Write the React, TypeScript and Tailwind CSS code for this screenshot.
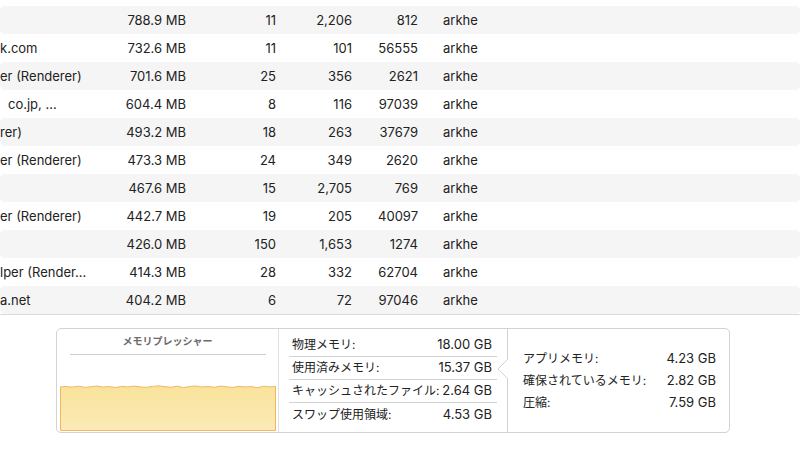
import React from "react";

const rows = [
  { name: "", mem: "788.9 MB", threads: "11", ports: "2,206", pid: "812" },
  { name: "k.com", mem: "732.6 MB", threads: "11", ports: "101", pid: "56555" },
  { name: "er (Renderer)", mem: "701.6 MB", threads: "25", ports: "356", pid: "2621" },
  { name: "co.jp, …", mem: "604.4 MB", threads: "8", ports: "116", pid: "97039", pad: true },
  { name: "rer)", mem: "493.2 MB", threads: "18", ports: "263", pid: "37679" },
  { name: "er (Renderer)", mem: "473.3 MB", threads: "24", ports: "349", pid: "2620" },
  { name: "", mem: "467.6 MB", threads: "15", ports: "2,705", pid: "769" },
  { name: "er (Renderer)", mem: "442.7 MB", threads: "19", ports: "205", pid: "40097" },
  { name: "", mem: "426.0 MB", threads: "150", ports: "1,653", pid: "1274" },
  { name: "lper (Render…", mem: "414.3 MB", threads: "28", ports: "332", pid: "62704" },
  { name: "a.net", mem: "404.2 MB", threads: "6", ports: "72", pid: "97046" },
];

const memStats = [
  { label: "物理メモリ:", value: "18.00 GB" },
  { label: "使用済みメモリ:", value: "15.37 GB" },
  { label: "キャッシュされたファイル:", value: "2.64 GB" },
  { label: "スワップ使用領域:", value: "4.53 GB" },
];

const usedStats = [
  { label: "アプリメモリ:", value: "4.23 GB" },
  { label: "確保されているメモリ:", value: "2.82 GB" },
  { label: "圧縮:", value: "7.59 GB" },
];

// jagged top edge of the pressure graph
const jitter = [2, 1.5, 2.2, 1.2, 2.4, 1.8, 1, 2.1, 1.6, 2.5, 1.3, 2, 1.1, 1.9, 2.3, 1.4, 0.8, 1.7, 2.2, 1.2, 2.6, 1.5, 1, 2, 1.4, 2.3, 1.1, 1.8, 2.4, 1.3, 2, 1.6, 2.7, 1.2, 1.9, 1.5];

const chartTop = jitter
  .map((y, i) => `L${(i * 216) / (jitter.length - 1)} ${y}`)
  .join(" ");

const PressureChart = () => (
  <svg width="216" height="46" viewBox="0 0 216 46" className="block">
    <defs>
      <linearGradient id="pg" x1="0" y1="0" x2="0" y2="1">
        <stop offset="0" stopColor="#f9e39b" />
        <stop offset="1" stopColor="#fbeab6" />
      </linearGradient>
    </defs>
    <path
      d={`M0.5 45.5 L0.5 2 ${chartTop} L215.5 2 L215.5 45.5 Z`}
      fill="url(#pg)"
      stroke="#f2b666"
      strokeWidth="1"
    />
  </svg>
);

const App = () => {
  return (
    <div
      className="w-[800px] h-[449px] bg-white overflow-hidden text-[#222]"
      style={{ fontFamily: '"Inter", "Noto Sans CJK JP", sans-serif' }}
    >
      {/* process table */}
      <div className="pt-[6px] border-b border-[#d9d9d9]">
        {rows.map((r, i) => (
          <div
            key={i}
            className={`flex items-center h-[28px] pt-[2px] text-[13px] rounded-[5px] ${
              i % 2 === 0 ? "bg-[#f5f5f5]" : "bg-white"
            }`}
          >
            <div className="w-[100px] overflow-hidden whitespace-nowrap">
              <span className={r.pad ? "ml-[8px]" : ""}>{r.name}</span>
            </div>
            <div className="w-[86px] text-right">{r.mem}</div>
            <div className="w-[90px] text-right">{r.threads}</div>
            <div className="w-[76px] text-right">{r.ports}</div>
            <div className="w-[66px] text-right">{r.pid}</div>
            <div className="pl-[25px]">arkhe</div>
          </div>
        ))}
      </div>

      {/* memory summary panel */}
      <div className="ml-[56px] mt-[13px] w-[674px] h-[105px] flex border border-[#d3d3d3] rounded-[5px] bg-white">
        <div className="w-[222px] flex flex-col items-center border-r border-[#e0e0e0]">
          <div className="mt-[5px] text-[10px] font-bold text-[#6b6b6b]">メモリプレッシャー</div>
          <div className="mt-[5px] w-[196px] h-px bg-[#cfcfcf]" />
          <div className="mt-auto mb-[1px]">
            <PressureChart />
          </div>
        </div>

        <div className="w-[228px] px-[10px] pt-[5px] text-[12px]">
          {memStats.map((s, i) => (
            <div
              key={s.label}
              className={`flex items-center justify-between h-[23px] pl-[3px] pr-[5px] ${
                i < memStats.length - 1 ? "border-b border-[#d3d3d3]" : ""
              }`}
            >
              <span>{s.label}</span>
              <span className="text-[13px]">{s.value}</span>
            </div>
          ))}
        </div>

        <div className="relative flex-1 flex flex-col justify-center pl-[15px] pr-[13px] border-l border-[#d3d3d3] text-[12px]">
          <svg
            width="11"
            height="20"
            viewBox="0 0 11 20"
            className="absolute left-[-11px] top-[30px]"
          >
            <path d="M11 0 L1 10 L11 20 Z" fill="white" />
            <path d="M11 0 L1 10 L11 20" fill="none" stroke="#d3d3d3" strokeWidth="1" />
          </svg>
          {usedStats.map((s) => (
            <div key={s.label} className="flex items-center justify-between h-[22px]">
              <span>{s.label}</span>
              <span className="text-[13px]">{s.value}</span>
            </div>
          ))}
        </div>
      </div>
    </div>
  );
};

export default App;
